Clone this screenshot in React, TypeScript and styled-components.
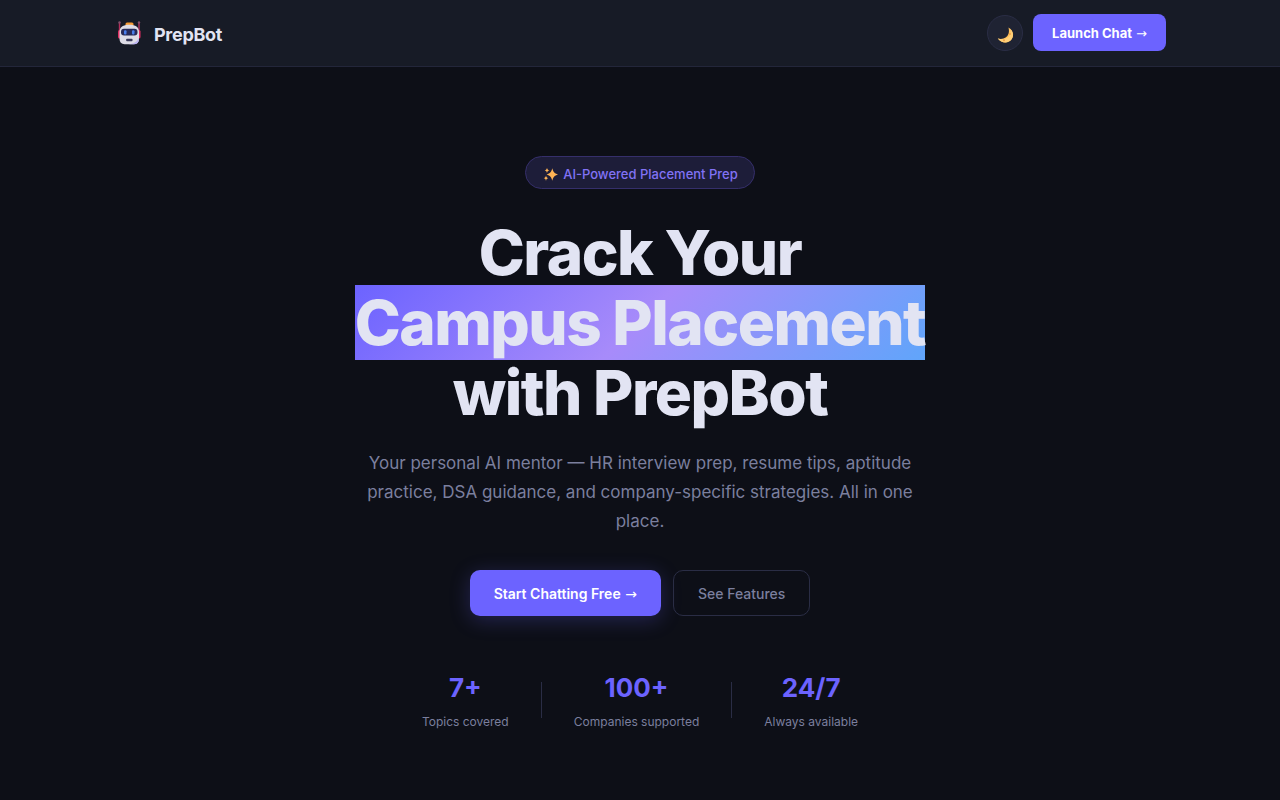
import React from "react";
import styled, { createGlobalStyle } from "styled-components";

const GlobalStyle = createGlobalStyle`
  * { box-sizing: border-box; }
  body {
    margin: 0;
    background: #0d0f17;
    color: #e2e4f3;
    font-family: Inter, "Liberation Sans", sans-serif;
  }
`;

const Nav = styled.header`
  background: #171b26;
  border-bottom: 1px solid #23263a;
`;

const NavInner = styled.nav`
  display: flex;
  align-items: center;
  justify-content: space-between;
  max-width: 1100px;
  margin: 0 auto;
  padding: 14px 24px 15px;
`;

const Brand = styled.a`
  display: flex;
  align-items: center;
  gap: 12px;
  color: #e2e4f3;
  font-size: 18px;
  line-height: 26px;
  font-weight: 700;
  letter-spacing: -0.3px;
  text-decoration: none;
`;

const BrandName = styled.span`
  padding-top: 4px;
`;

const Actions = styled.div`
  display: flex;
  align-items: center;
  gap: 10px;
`;

const ThemeButton = styled.button`
  display: grid;
  place-items: center;
  width: 36px;
  height: 36px;
  padding: 4px 0 0;
  border: 1px solid #2a2d45;
  border-radius: 50%;
  background: #1f2333;
  cursor: pointer;
`;

const Button = styled.a<{ $kind: "nav" | "primary" | "outline" }>`
  display: inline-block;
  border-radius: ${(p) => (p.$kind === "nav" ? "8px" : "10px")};
  border: ${(p) => (p.$kind === "outline" ? "1px solid #2a2d45" : "0")};
  padding: ${(p) => (p.$kind === "nav" ? "10px 19px 9px" : p.$kind === "primary" ? "15px 24px 13px" : "14px 24px 12px")};
  background: ${(p) => (p.$kind === "outline" ? "transparent" : "#6c63ff")};
  color: ${(p) => (p.$kind === "outline" ? "#7b7f9e" : "#fff")};
  box-shadow: ${(p) => (p.$kind === "primary" ? "0 4px 20px rgba(108, 99, 255, 0.25)" : "none")};
  font-size: ${(p) => (p.$kind === "nav" ? "13px" : "14px")};
  line-height: 18px;
  font-weight: ${(p) => (p.$kind === "outline" ? 500 : p.$kind === "nav" ? 700 : 600)};
  text-decoration: none;
`;

const Arrow = styled.span`
  margin-left: 1px;
  font-family: "DejaVu Sans", sans-serif;
  font-weight: 400;
  line-height: 1;
`;

const Hero = styled.main`
  display: flex;
  flex-direction: column;
  align-items: center;
  padding: 89px 24px 70px;
  text-align: center;
`;

const Badge = styled.div`
  display: flex;
  align-items: center;
  gap: 4px;
  padding: 9px 16px 5px 17px;
  border: 1px solid #352f6b;
  border-radius: 20px;
  background: #1d1d39;
  color: #8172f5;
  font-size: 13px;
  line-height: 17px;
  font-weight: 500;
`;

const Title = styled.h1`
  margin: 29px 0 21px;
  font-size: 62px;
  line-height: 70px;
  font-weight: 800;
  letter-spacing: -1.5px;
`;

const Highlight = styled.span`
  background: linear-gradient(135deg, #6c63ff 0%, #a78bfa 50%, #60a5fa 100%);
`;

const Lead = styled.p`
  max-width: 560px;
  margin: 0 0 34px;
  color: #7b7f9e;
  font-size: 17px;
  line-height: 29px;
`;

const Cta = styled.div`
  display: flex;
  flex-wrap: wrap;
  justify-content: center;
  gap: 12px;
`;

const Stats = styled.div`
  display: flex;
  align-items: center;
  justify-content: center;
  gap: 32px;
  margin-top: 54px;
`;

const Stat = styled.div`
  display: flex;
  flex-direction: column;
  gap: 9px;
  padding-top: 2px;
`;

const StatValue = styled.strong`
  color: #6c63ff;
  font-size: 26px;
  line-height: 32px;
  font-weight: 700;
`;

const StatLabel = styled.span`
  color: #7b7f9e;
  font-size: 12px;
  line-height: 18px;
`;

const Divider = styled.div`
  width: 1px;
  height: 36px;
  margin-bottom: 2px;
  background: #2a2d45;
`;

const Robot = () => (
  <svg width="28" height="26" viewBox="0 0 28 26" aria-hidden="true">
    <path d="M5.500 3v10M25 3v10" stroke="#b52f5b" strokeWidth="1.400" />
    <circle cx="5.500" cy="2.500" r="1.200" fill="#80506c" />
    <circle cx="25" cy="2.500" r="1.200" fill="#80506c" />
    <rect x="4" y="10" width="4" height="8.500" rx="1.500" fill="#e02f62" />
    <rect x="22.500" y="10" width="4" height="8.500" rx="1.500" fill="#e02f62" />
    <rect x="11.500" y="2.500" width="8" height="4" rx="1.500" fill="#f59b35" />
    <path d="M5.500 12c0-5 3.500-7.200 9.800-7.200S25 7 25 12v6.500c0 3.800-1.800 5.700-5 5.700h-9.500c-3.200 0-5-1.900-5-5.700z" fill="#dddce6" />
    <path d="M14.500 24.200c5-.2 8.500-2.200 10.500-6.500v1c0 3.700-1.800 5.500-5 5.500z" fill="#bbb3f0" />
    <rect x="7" y="8.800" width="16.500" height="6.700" rx="3" fill="#272a58" />
    <rect x="10" y="10.200" width="2.500" height="4.200" rx="1" fill="#4a7fec" />
    <rect x="18" y="10.200" width="2.500" height="4.200" rx="1" fill="#4a7fec" />
    <rect x="12.200" y="18.800" width="6.300" height="2.400" rx=".8" fill="#39395a" />
  </svg>
);

const Moon = () => (
  <svg width="18" height="18" viewBox="0 0 18 18" aria-hidden="true">
    <path d="M12.500 1.500C17 4 18.400 9 15.800 13 13 17.300 6 18.200 1.800 12.500c5 1.300 9.400-.7 10.700-4.700.7-2.200.5-4.300 0-6.300z" fill="#ffc05c" />
    <path d="M1.800 12.500c3.500 1.300 7.500 1 10.500-1.500 2-1.700 3-4.500 2-8.200 2.800 3 3.500 7 1.500 10.200C13 17.300 6 18.200 1.800 12.500z" fill="#ffcf78" />
    <circle cx="8" cy="14.200" r="1" fill="#f0a044" />
    <circle cx="14" cy="8" r=".9" fill="#f0a044" />
  </svg>
);

const Sparkles = () => (
  <svg width="16" height="16" viewBox="0 0 16 16" fill="#ffb455" aria-hidden="true">
    <path d="M9.300 1.200c.9 3.600 2 5.200 5.700 6.300-3.700 1.100-4.800 2.700-5.700 6.300-.9-3.600-2-5.200-5.700-6.300 3.700-1.100 4.800-2.700 5.700-6.300z" />
    <path d="M4 .8c.3 1.700.8 2.300 2.300 2.700C4.800 3.900 4.300 4.500 4 6.200c-.3-1.700-.8-2.300-2.300-2.700C3.200 3.100 3.700 2.500 4 .8zM3 8.500c.3 1.700.8 2.300 2.300 2.700-1.500.4-2 1-2.300 2.700-.3-1.700-.8-2.300-2.300-2.700 1.500-.4 2-1 2.300-2.700z" />
  </svg>
);

const stats = [
  { value: "7+", label: "Topics covered" },
  { value: "100+", label: "Companies supported" },
  { value: "24/7", label: "Always available" },
];

export default function App() {
  return (
    <>
      <GlobalStyle />
      <Nav>
        <NavInner>
          <Brand href="#">
            <Robot />
            <BrandName>PrepBot</BrandName>
          </Brand>
          <Actions>
            <ThemeButton type="button" aria-label="Toggle theme">
              <Moon />
            </ThemeButton>
            <Button href="#chat" $kind="nav">
              Launch Chat <Arrow>→</Arrow>
            </Button>
          </Actions>
        </NavInner>
      </Nav>
      <Hero>
        <Badge>
          <Sparkles />
          AI-Powered Placement Prep
        </Badge>
        <Title>
          Crack Your
          <br />
          <Highlight>Campus Placement</Highlight>
          <br />
          with PrepBot
        </Title>
        <Lead>
          Your personal AI mentor — HR interview prep, resume tips, aptitude practice, DSA
          guidance, and company-specific strategies. All in one place.
        </Lead>
        <Cta>
          <Button href="#chat" $kind="primary">
            Start Chatting Free <Arrow>→</Arrow>
          </Button>
          <Button href="#features" $kind="outline">See Features</Button>
        </Cta>
        <Stats>
          {stats.map((s, i) => (
            <React.Fragment key={s.label}>
              {i > 0 && <Divider />}
              <Stat>
                <StatValue>{s.value}</StatValue>
                <StatLabel>{s.label}</StatLabel>
              </Stat>
            </React.Fragment>
          ))}
        </Stats>
      </Hero>
    </>
  );
}
